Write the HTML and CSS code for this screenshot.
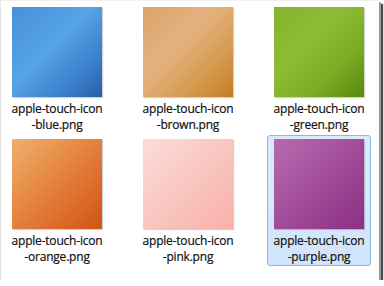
FILE: index.html
```html
<!DOCTYPE html>
<html lang="en">
  <head>
    <meta charset="UTF-8" />
    <title>apple-touch-icon files</title>
    <link rel="stylesheet" href="styles.css">
  </head>
  <body>
    <div class="window">
      <div class="grid">
        <div class="item">
          <div class="thumb blue"></div>
          <div class="name"><div>apple-touch-icon</div><div>-blue.png</div></div>
        </div>
        <div class="item">
          <div class="thumb brown"></div>
          <div class="name"><div>apple-touch-icon</div><div>-brown.png</div></div>
        </div>
        <div class="item">
          <div class="thumb green"></div>
          <div class="name"><div>apple-touch-icon</div><div>-green.png</div></div>
        </div>
        <div class="item">
          <div class="thumb orange"></div>
          <div class="name"><div>apple-touch-icon</div><div>-orange.png</div></div>
        </div>
        <div class="item">
          <div class="thumb pink"></div>
          <div class="name"><div>apple-touch-icon</div><div>-pink.png</div></div>
        </div>
        <div class="item selected">
          <div class="thumb purple"></div>
          <div class="name"><div>apple-touch-icon</div><div>-purple.png</div></div>
        </div>
      </div>
    </div>
  </body>
</html>
```

FILE: styles.css
```css
body {
  margin: 0;
  padding: 0;
  background: #fff;
  font-family: "Open Sans", Arial, sans-serif;
  color: #111;
}

.window {
  width: 379px;
  height: 280px;
  background: #fff;
  border-left: 1px solid #e4e4e4;
  border-top: 1px solid #f0f0f0;
  box-sizing: border-box;
  box-shadow: 2px 2px 0 #9a9a9a, 4px 4px 1px #4a4a4a;
}

.grid {
  display: grid;
  grid-template-columns: repeat(3, 104px);
  grid-auto-rows: 131px;
  column-gap: 27px;
  row-gap: 1px;
  padding: 2px 0 0 4px;
}

.item {
  display: flex;
  flex-direction: column;
  align-items: center;
  padding-top: 3px;
  border: 1px solid transparent;
  border-radius: 3px;
  box-sizing: border-box;
}

.item.selected {
  background: linear-gradient(#dcebfc, #d0e4fb);
  border-color: #8eb6e2;
}

.thumb {
  width: 90px;
  height: 90px;
  flex: none;
  box-shadow: 1px 1px 1px rgba(0, 0, 0, 0.18);
}

.name {
  margin-top: 4px;
  font-size: 12px;
  text-align: center;
  white-space: nowrap;
  letter-spacing: -0.2px;
  -webkit-text-stroke: 0.2px #111;
}

.name div {
  line-height: 16px;
}

.blue {
  background: linear-gradient(135deg, #4690da 0%, #57a3e6 45%, #3b80cc 75%, #2a5ea8 100%);
}

.brown {
  background: linear-gradient(135deg, #dca46c 0%, #e2b27f 40%, #d69a50 72%, #c47e22 100%);
}

.green {
  background: linear-gradient(135deg, #84b42c 0%, #8ebd35 40%, #79a822 72%, #588b0c 100%);
}

.orange {
  background: linear-gradient(135deg, #efb070 0%, #e68a45 40%, #dc6c2a 72%, #cf5316 100%);
}

.pink {
  background: linear-gradient(135deg, #fcdcda 0%, #fac8c3 45%, #f8b0a8 100%);
}

.purple {
  background: linear-gradient(135deg, #b46cad 0%, #a6539e 40%, #993f90 72%, #8b3082 100%);
}
```
